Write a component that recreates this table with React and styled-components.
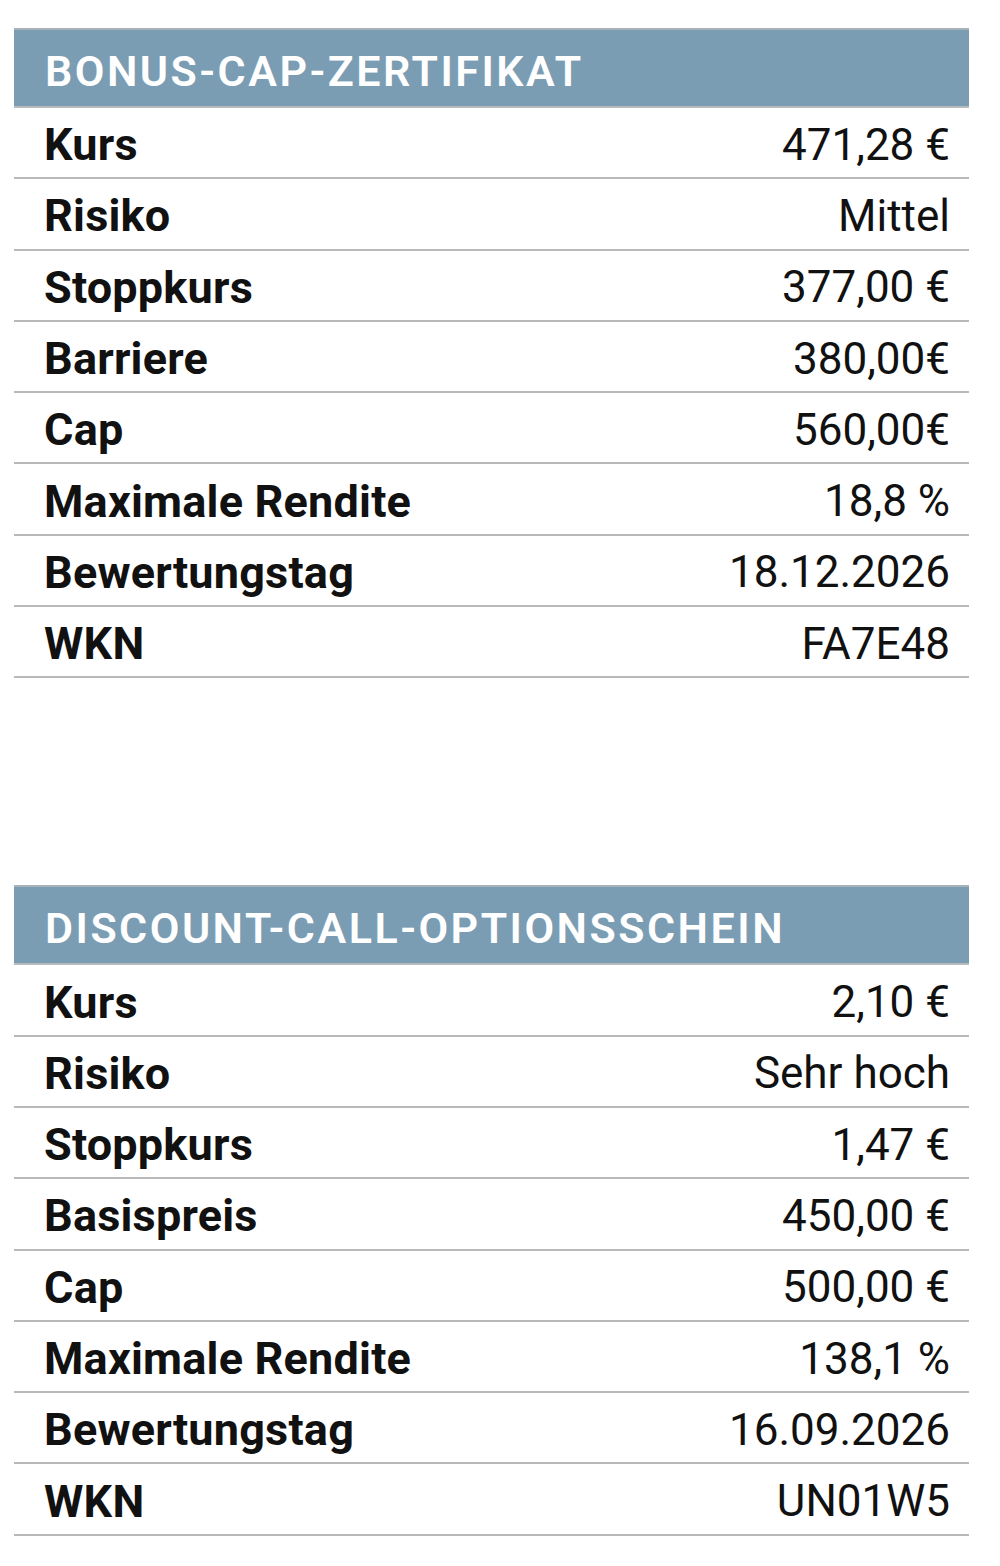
import React from "react";
import styled, { createGlobalStyle } from "styled-components";

const GlobalStyle = createGlobalStyle`
  html, body { margin: 0; padding: 0; background: #fff; }
  body { font-family: Roboto, "Liberation Sans", sans-serif; color: #111; }
`;

const Page = styled.main`
  width: 955px;
  padding: 28px 0 0 14px;
  display: flex;
  flex-direction: column;
  gap: 207px;
`;

const Table = styled.section`
  display: flex;
  flex-direction: column;
`;

const Header = styled.h2`
  margin: 0;
  box-sizing: border-box;
  height: 80px;
  border-top: 2px solid #a9b2b8;
  border-bottom: 2px solid #b7bcbf;
  background: #7b9db3;
  color: #fff;
  display: flex;
  align-items: center;
  padding: 5px 0 0 31px;
  font-family: Roboto, "Liberation Sans", sans-serif;
  font-weight: 600;
  font-size: 43px;
  letter-spacing: 2.5px;
`;

const Row = styled.div`
  height: 71.3px;
  box-sizing: border-box;
  border-bottom: 2px solid #b9b9b9;
  display: flex;
  align-items: center;
  justify-content: space-between;
  padding: 4px 19px 0 30px;
`;

const Label = styled.span`
  font-weight: 700;
  font-size: 45px;
  letter-spacing: 0.2px;
  color: #111;
`;

const Value = styled.span`
  font-weight: 400;
  font-size: 44px;
  color: #111;
`;

const tables = [
  {
    title: "BONUS-CAP-ZERTIFIKAT",
    rows: [
      ["Kurs", "471,28 €"],
      ["Risiko", "Mittel"],
      ["Stoppkurs", "377,00 €"],
      ["Barriere", "380,00€"],
      ["Cap", "560,00€"],
      ["Maximale Rendite", "18,8 %"],
      ["Bewertungstag", "18.12.2026"],
      ["WKN", "FA7E48"],
    ],
  },
  {
    title: "DISCOUNT-CALL-OPTIONSSCHEIN",
    rows: [
      ["Kurs", "2,10 €"],
      ["Risiko", "Sehr hoch"],
      ["Stoppkurs", "1,47 €"],
      ["Basispreis", "450,00 €"],
      ["Cap", "500,00 €"],
      ["Maximale Rendite", "138,1 %"],
      ["Bewertungstag", "16.09.2026"],
      ["WKN", "UN01W5"],
    ],
  },
];

export default function App() {
  return (
    <>
      <GlobalStyle />
      <Page>
        {tables.map((t) => (
          <Table key={t.title}>
            <Header>{t.title}</Header>
            {t.rows.map(([k, v]) => (
              <Row key={k}>
                <Label>{k}</Label>
                <Value>{v}</Value>
              </Row>
            ))}
          </Table>
        ))}
      </Page>
    </>
  );
}
